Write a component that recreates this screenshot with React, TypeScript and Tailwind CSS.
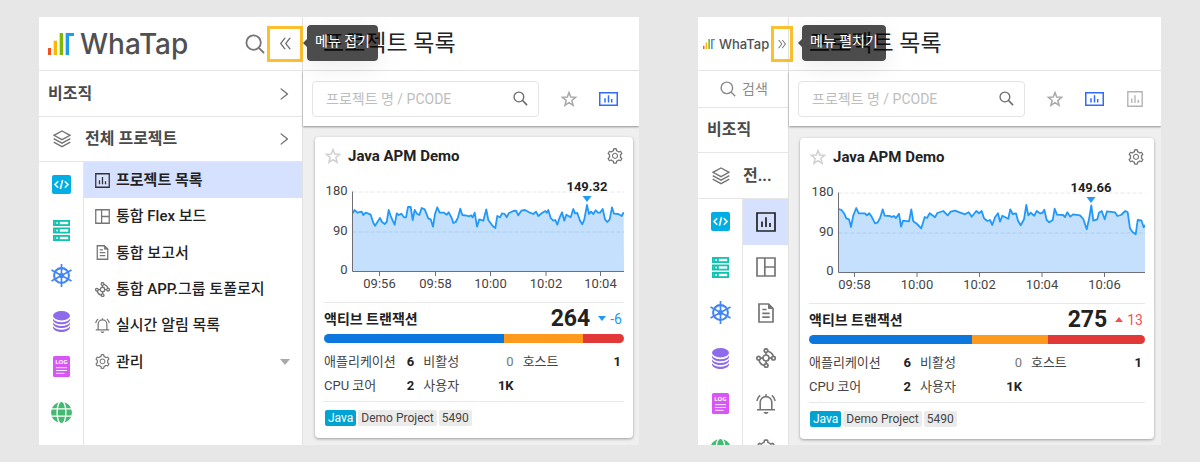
import React from 'react';
import {
  AiOutlineDoubleLeft,
  AiOutlineDoubleRight,
  AiOutlineRight,
  AiOutlineSetting,
} from 'react-icons/ai';

type IconProps = { className?: string };

/* ---------- line icons ---------- */

const SearchIcon = ({ className = '' }: IconProps) => (
  <svg viewBox="0 0 20 20" className={className} fill="none" stroke="currentColor" strokeWidth="1.8" aria-hidden="true">
    <circle cx="8.6" cy="8.6" r="7.2" />
    <path d="M13.8 13.8 19 19" />
  </svg>
);

const FieldSearchIcon = ({ className = '' }: IconProps) => (
  <svg viewBox="0 0 16 16" className={className} fill="none" stroke="currentColor" strokeWidth="1.4" aria-hidden="true">
    <circle cx="6.3" cy="6.3" r="5.2" />
    <path d="M9.9 9.9 15 15" strokeWidth="1.7" />
  </svg>
);

const StarIcon = ({ className = '' }: IconProps) => (
  <svg viewBox="0 0 24 24" className={className} fill="none" stroke="currentColor" strokeWidth="2" aria-hidden="true">
    <path d="m12 3.4 2.3 6 6.5.4-5 4.2 1.600 6.400-5.400-3.600-5.400 3.600L8.200 14l-5-4.200 6.500-.4z" />
  </svg>
);

const WideChartIcon = ({ className = '' }: IconProps) => (
  <svg viewBox="0 0 19 14" className={className} fill="none" stroke="currentColor" aria-hidden="true">
    <path d="M.75.75h17.5v12.5H.75z" strokeWidth="1.5" />
    <path d="M6 10.500V6.300M9.500 10.500V3.300M12.700 10.500V7" strokeWidth="1.500" />
  </svg>
);

const ChartIcon = ({ className = '' }: IconProps) => (
  <svg viewBox="0 0 20 20" className={className} fill="none" stroke="currentColor" strokeWidth="1.7" aria-hidden="true">
    <path d="M1 1h18v18H1z" />
    <path d="M6 15V9.500M10 15V5.300M14 15v-4" />
  </svg>
);

const BoardIcon = ({ className = '' }: IconProps) => (
  <svg viewBox="0 0 20 20" className={className} fill="none" stroke="currentColor" strokeWidth="1.700" aria-hidden="true">
    <path d="M1 1h18v18H1zM8.800 1v18M8.800 10H19" />
  </svg>
);

const ReportIcon = ({ className = '' }: IconProps) => (
  <svg viewBox="0 0 20 20" className={className} fill="none" stroke="currentColor" strokeWidth="1.700" aria-hidden="true">
    <path d="M3 1h9.500L17 5.500V19H3z" />
    <path d="M12.500 1v4.500H17z" fill="currentColor" strokeWidth="1" />
    <path d="M6.300 6.500h4.200M6.300 10.300h7.400M6.300 14.200h7.400" />
  </svg>
);

const TopologyIcon = ({ className = '' }: IconProps) => (
  <svg viewBox="0 0 20 20" className={className} fill="none" stroke="currentColor" strokeWidth="1.700" aria-hidden="true">
    <circle cx="10" cy="10" r="3" />
    <circle cx="10" cy="2.600" r="1.800" />
    <circle cx="2.600" cy="10.200" r="1.800" />
    <circle cx="17.500" cy="10.200" r="1.800" />
    <circle cx="10.200" cy="17.500" r="1.800" />
    <path d="M10 4.300V7M4.200 10.200H7M13 10.200h2.900M10.100 13v2.800M11.800 3.200c3.200.9 5 2.700 5.400 5.200M2.900 12c.7 3 2.400 4.700 5.500 5.400" />
  </svg>
);

const BellIcon = ({ className = '' }: IconProps) => (
  <svg viewBox="0 0 20 20" className={className} fill="none" stroke="currentColor" strokeWidth="1.600" aria-hidden="true">
    <path d="M1 15.700h18M4.200 15.700V8.400a5.800 5.800 0 0 1 11.600 0v7.300M10 2.600V.3" />
    <path d="M.9 6.800C1.300 4.300 2.400 2.600 4.200 1.300M19.100 6.800c-.4-2.500-1.500-4.200-3.300-5.500" />
    <path d="M7.500 18h5c-.4 1.300-1.300 2-2.500 2s-2.100-.7-2.500-2z" fill="currentColor" stroke="none" />
  </svg>
);

const LayersIcon = ({ className = '' }: IconProps) => (
  <svg viewBox="0 0 18 18" className={className} fill="none" stroke="currentColor" strokeWidth="1.400" aria-hidden="true">
    <path d="M9 1 17 5.300 9 9.600 1 5.300z" />
    <path d="m.7 8.700 8.300 4.400 8.300-4.400M.7 12.200 9 16.600l8.300-4.400" />
  </svg>
);

/* ---------- product icons ---------- */

const CodeIcon = () => (
  <svg viewBox="0 0 19 19" className="size-[19px]" aria-hidden="true">
    <rect width="19" height="19" rx="2" fill="#00aee6" />
    <path d="M6.200 6.300 3 9.500l3.200 3.200M12.800 6.300 16 9.500l-3.200 3.200M10.600 5 8.400 14" fill="none" stroke="#fff" strokeWidth="1.600" />
  </svg>
);

const ServerIcon = () => (
  <svg viewBox="0 0 17 21" className="h-[21px] w-[17px]" aria-hidden="true">
    {[0, 7.5, 15].map((y) => (
      <g key={y}>
        <rect x=".9" y={y + 0.9} width="15.200" height="4.200" fill="none" stroke="#11c3b0" strokeWidth="1.800" />
        <rect x="2" y={y + 1} width="4.800" height="4" fill="#11c3b0" />
        <rect x="3.300" y={y + 2.2} width="1.700" height="1.600" fill="#fff" />
      </g>
    ))}
  </svg>
);

const WheelIcon = () => (
  <svg viewBox="0 0 21 23" className="h-[23px] w-[21px]" fill="none" stroke="#4285f4" aria-hidden="true">
    <circle cx="10.500" cy="11.500" r="7.400" strokeWidth="2.100" />
    <path d="M10.500 0v23M.5 6l20 11M20.500 6l-20 11" strokeWidth="1.700" />
    <circle cx="10.500" cy="11.500" r="2.600" fill="#4285f4" stroke="none" />
  </svg>
);

const DatabaseIcon = () => (
  <svg viewBox="0 0 17 21" className="h-[21px] w-[17px]" aria-hidden="true">
    <ellipse cx="8.500" cy="4.700" rx="8.500" ry="4.700" fill="#8e6bea" />
    <path
      d="M0 7.800c1.200 2.200 4.600 3.400 8.500 3.400S15.800 10 17 7.800v1.700c-1 2.300-4.400 3.700-8.500 3.700S1 11.800 0 9.500zM0 11.500c1.200 2.200 4.600 3.400 8.500 3.400s7.300-1.200 8.500-3.400v1.700c-1 2.300-4.400 3.700-8.500 3.700S1 15.500 0 13.200zM0 15.300c1.200 2.200 4.600 3.400 8.500 3.400s7.300-1.200 8.500-3.400V17c-1 2.400-4.400 4-8.500 4S1 19.400 0 17z"
      fill="#8e6bea"
    />
  </svg>
);

const LogIcon = () => (
  <svg viewBox="0 0 17 21" className="h-[21px] w-[17px]" aria-hidden="true">
    <rect width="17" height="21" rx="1.500" fill="#d955f5" />
    <text x="8.500" y="8.300" textAnchor="middle" fill="#fff" className="font-['Noto_Sans'] text-[6px] font-bold">LOG</text>
    <path d="M3 11.700h11M3 14.500h11M3 17.300h8.500" stroke="#fff" strokeWidth=".9" />
  </svg>
);

const GlobeIcon = () => (
  <svg viewBox="0 0 62 62" className="size-[21px]" aria-hidden="true">
    <circle cx="31" cy="31" r="31" fill="#43b971" />
    <path d="M0 20.500h62M0 41.500h62" stroke="#fff" strokeWidth="4" />
    <ellipse cx="31" cy="31" rx="13" ry="34" fill="none" stroke="#fff" strokeWidth="4" />
  </svg>
);

const products = [
  { name: '애플리케이션', Icon: CodeIcon },
  { name: '서버', Icon: ServerIcon },
  { name: '쿠버네티스', Icon: WheelIcon },
  { name: '데이터베이스', Icon: DatabaseIcon },
  { name: '로그', Icon: LogIcon },
  { name: '브라우저', Icon: GlobeIcon },
];

const menus = [
  { name: '프로젝트 목록', Icon: ChartIcon },
  { name: '통합 Flex 보드', Icon: BoardIcon },
  { name: '통합 보고서', Icon: ReportIcon },
  { name: '통합 APP.그룹 토폴로지', Icon: TopologyIcon },
  { name: '실시간 알림 목록', Icon: BellIcon },
  { name: '관리', Icon: AiOutlineSetting },
];

/* ---------- brand ---------- */

const LogoMark = ({ className = '' }: IconProps) => (
  <svg viewBox="0 0 78 66" className={className} aria-hidden="true">
    <path d="M0 45h9v21H0z" fill="#f4511e" />
    <path d="M17 23h10v43H17z" fill="#fbb800" />
    <path d="M35 0h10v66H35z" fill="#7cb900" />
    <path d="M53 0h25v9H63v57H53z" fill="#1e9be9" />
  </svg>
);

/* ---------- sidebar ---------- */

function Tooltip({ children }: { children: React.ReactNode }) {
  return (
    <div
      role="tooltip"
      className="absolute top-2 left-1 z-20 h-9 rounded bg-black/70 px-2 text-sm leading-8 whitespace-nowrap text-white shadow-[0_6px_24px_rgba(0,0,0,0.08)]"
    >
      <span className="absolute top-[14px] -left-1 h-2 w-1 bg-black/70 [clip-path:polygon(100%_0,0_50%,100%_100%)]" />
      {children}
    </div>
  );
}

function ProductRail() {
  return (
    <nav aria-label="제품" className="w-[45px] shrink-0 border-r border-[#e6e6e6]">
      <ul className="grid h-[273px] grid-rows-6">
        {products.map(({ name, Icon }) => (
          <li key={name} className="flex items-center justify-center">
            <a href="#" aria-label={name}><Icon /></a>
          </li>
        ))}
      </ul>
    </nav>
  );
}

function ExpandedSidebar() {
  return (
    <aside className="flex w-[264px] shrink-0 flex-col border-r border-[#e2e2e2] bg-white text-[#4a4a4a]">
      <div className="flex h-[54px] items-center border-b border-[#e6e6e6] pl-[9px]">
        <a href="#" className="flex items-center gap-1.5 text-[#505052]">
          <LogoMark className="h-[22px] w-[26px]" />
          <span className="font-['Inter'] text-[28px] leading-9 font-medium">WhaTap</span>
        </a>
        <button type="button" aria-label="검색" className="ml-auto text-[#757575]">
          <SearchIcon className="size-5" />
        </button>
        <button
          type="button"
          aria-label="메뉴 접기"
          className="-mr-px ml-[2px] flex size-9 items-center justify-center border-3 border-[#fbc02d] text-[#6b6b6b]"
        >
          <AiOutlineDoubleLeft className="size-[17px]" />
        </button>
      </div>
      <button type="button" className="flex h-[46px] items-center justify-between border-b border-[#e6e6e6] pr-2.5 pl-[9px] text-base font-bold">
        비조직
        <AiOutlineRight className="size-4 text-[#757575]" />
      </button>
      <button type="button" className="flex h-[45px] items-center border-b border-[#e6e6e6] pr-2.5 pl-3.5 text-base font-bold">
        <LayersIcon className="size-[18px] text-[#757575]" />
        <span className="ml-3.5">전체 프로젝트</span>
        <AiOutlineRight className="ml-auto size-4 text-[#757575]" />
      </button>
      <div className="flex min-h-0 grow basis-0 overflow-hidden">
        <ProductRail />
        <nav aria-label="메뉴" className="flex-1">
          <ul className="grid h-[218px] grid-rows-6">
            {menus.map(({ name, Icon }, i) => (
              <li key={name} className={i === 0 ? 'bg-[#d6e0ff]' : ''}>
                <a href="#" className={`flex h-full items-center pr-3 pl-[11px] text-[15px] text-[#222] ${i === 0 ? 'font-bold' : 'font-medium'}`}>
                  <Icon className={i === 0 ? 'size-[15px] text-[#333]' : i === 5 ? 'size-[17px] -mx-px text-[#757575]' : 'size-[15px] text-[#757575]'} />
                  <span className="ml-1.5">{name}</span>
                  {i === 5 && (
                    <svg viewBox="0 0 10 6" className="ml-auto h-1.5 w-2.5" aria-hidden="true">
                      <path d="M0 0h10L5 6z" fill="#a9a9a9" />
                    </svg>
                  )}
                </a>
              </li>
            ))}
          </ul>
        </nav>
      </div>
    </aside>
  );
}

function CollapsedSidebar() {
  return (
    <aside className="flex w-[91px] shrink-0 flex-col border-r border-[#e2e2e2] bg-white text-[#4a4a4a]">
      <div className="flex h-[54px] items-center border-b border-[#e6e6e6] pl-[5px]">
        <a href="#" className="flex items-center gap-1 text-[#505052]">
          <LogoMark className="h-[10px] w-3" />
          <span className="font-['Inter'] text-[13px] leading-5 font-medium">WhaTap</span>
        </a>
        <button
          type="button"
          aria-label="메뉴 펼치기"
          className="relative z-10 -mr-[5px] ml-auto flex h-9 w-[22px] shrink-0 items-center justify-center border-3 border-[#fbc02d] text-[#757575]"
        >
          <AiOutlineDoubleRight className="size-3" />
        </button>
      </div>
      <button type="button" className="flex h-[37px] items-center gap-1.5 border-b border-[#e6e6e6] pl-[22px] text-sm text-[#8a8a8a]">
        <SearchIcon className="size-4" />
        검색
      </button>
      <button type="button" className="flex h-[45px] items-center border-b border-[#e6e6e6] pl-[9px] text-base font-bold">
        비조직
      </button>
      <button type="button" className="flex h-[46px] items-center border-b border-[#e6e6e6] pl-3.5 text-base font-bold">
        <LayersIcon className="size-[18px] text-[#757575]" />
        <span className="ml-[13px]">전...</span>
      </button>
      <div className="flex min-h-0 grow basis-0 overflow-hidden">
        <ProductRail />
        <nav aria-label="메뉴" className="flex-1">
          <ul className="grid h-[273px] grid-rows-6">
            {menus.map(({ name, Icon }, i) => (
              <li key={name} className={i === 0 ? 'bg-[#d6e0ff]' : ''}>
                <a href="#" aria-label={name} className="flex h-full items-center justify-center">
                  <Icon className={i === 0 ? 'size-5 text-[#222]' : i === 5 ? 'size-[22px] text-[#757575]' : 'size-5 text-[#757575]'} />
                </a>
              </li>
            ))}
          </ul>
        </nav>
      </div>
    </aside>
  );
}

/* ---------- chart ---------- */

type ChartProps = {
  width: number;
  axisX: number;
  originX: number;
  originY: number;
  samples: string;
  ticks: [number, string][];
  peakX: number;
  peak: string;
};

function AreaChart({ width, axisX, originX, originY, samples, ticks, peakX, peak }: ChartProps) {
  const line = samples
    .split(' ')
    .map((pair) => {
      const [x, y] = pair.split(',').map(Number);
      return `${(x / 3 + originX).toFixed(1)},${(y / 3 + originY).toFixed(1)}`;
    })
    .join(' ');
  return (
    <svg viewBox={`0 0 ${width} 120`} className="block h-auto w-full text-[13px]" role="img" aria-label="액티브 트랜잭션 추이">
      <path d={`M${axisX} 17H${width}`} stroke="#e8e8e8" strokeDasharray="4 2" />
      <polygon points={`${axisX},96 ${line} ${width},96`} fill="#c5e0fd" />
      <path d={`M${axisX} 57H${width}`} stroke="#abcdec" strokeDasharray="4 2" />
      <polyline points={line} fill="none" stroke="#2199fb" strokeWidth="1.8" strokeLinejoin="round" />
      <path d={`M${axisX} 16.500V96.500H${width}`} fill="none" stroke="#6e7079" />
      <g fill="#444" textAnchor="end">
        <text x={axisX - 5} y="20">180</text>
        <text x={axisX - 5} y="60">90</text>
        <text x={axisX - 5} y="99">0</text>
      </g>
      <g fill="#444" textAnchor="middle">
        {ticks.map(([x, label]) => (
          <g key={label}>
            <path d={`M${x} 96v5`} stroke="#6e7079" />
            <text x={x} y="113">{label}</text>
          </g>
        ))}
      </g>
      <text x={peakX} y="16" textAnchor="middle" fill="#222" className="font-bold">{peak}</text>
      <path d={`M${peakX - 4.5} 21h9l-4.500 6z`} fill="#2199fb" />
    </svg>
  );
}

const chartBefore: ChartProps = {
  width: 300,
  axisX: 28.5,
  originX: -24,
  originY: -45,
  samples:
    '158,250 164,240 172,248 185,245 190,255 197,248 212,254 220,278 225,287 240,264 246,276 254,282 260,276 266,240 272,258 278,272 284,284 290,250 296,255 304,251 312,262 318,262 324,231 332,231 338,270 344,240 351,251 358,255 365,234 374,238 385,265 392,268 399,290 405,252 412,232 419,248 432,248 440,254 446,247 455,264 460,279 467,276 474,262 481,236 487,255 500,257 508,259 513,256 518,262 524,248 531,290 538,268 550,272 559,238 565,270 578,288 586,294 592,258 600,262 606,250 614,252 620,262 626,250 640,243 648,242 655,256 664,242 675,240 690,248 700,252 708,245 715,258 727,248 736,243 740,248 745,240 752,264 760,272 766,270 772,284 779,262 786,247 793,272 799,254 812,262 820,237 825,250 832,249 840,272 847,283 853,268 861,225 867,252 873,245 880,252 887,241 894,248 900,248 908,237 915,268 922,276 929,268 936,232 942,251 955,252 965,258 971,247',
  ticks: [[55.5, '09:56'], [111.5, '09:58'], [166.5, '10:00'], [222, '10:02'], [276.5, '10:04']],
  peakX: 263,
  peak: '149.32',
};

const chartAfter: ChartProps = {
  width: 336,
  axisX: 29.5,
  originX: 91,
  originY: -46,
  samples:
    '-183,237 -175,241 -167,251 -161,265 -153,268 -147,291 -140,256 -131,234 -124,250 -106,250 -99,256 -92,250 -84,262 -75,280 -67,277 -60,265 -52,238 -46,257 -30,258 -25,261 -19,258 -12,264 -3,251 3,290 9,272 27,274 34,238 40,274 51,282 64,295 74,261 81,264 89,250 105,262 112,249 130,243 143,256 152,245 165,242 195,253 206,247 215,260 229,243 237,250 245,243 252,265 262,273 270,270 277,285 285,262 294,250 300,275 307,257 325,266 331,238 338,252 348,250 354,272 362,286 372,268 379,225 385,256 392,248 403,257 410,243 420,250 427,249 433,239 440,270 448,277 458,270 464,236 471,254 489,255 495,261 502,247 511,260 519,253 540,256 550,267 560,298 567,268 574,226 580,272 592,268 597,248 605,243 614,268 621,244 645,247 652,258 663,255 676,243 683,247 690,295 697,305 707,313 713,270 724,271 731,292 735,285',
  ticks: [[45.5, '09:58'], [108, '10:00'], [170.5, '10:02'], [233, '10:04'], [295.5, '10:06']],
  peakX: 282,
  peak: '149.66',
};

/* ---------- main area ---------- */

function Stat({ label, value, muted = false }: { label: string; value: string; muted?: boolean }) {
  return (
    <div className="flex justify-between">
      <dt className="text-[#444]">{label}</dt>
      <dd className={muted ? 'text-[#777]' : 'font-bold text-[#222]'}>{value}</dd>
    </div>
  );
}

type CardProps = {
  chart: ChartProps;
  total: string;
  delta: string;
  rising?: boolean;
  shares: [number, number, number];
};

function ProjectCard({ chart, total, delta, rising = false, shares }: CardProps) {
  return (
    <article className="rounded bg-white px-[9px] pb-3 shadow-[0_1px_3px_rgba(0,0,0,0.35)]">
      <header className="flex h-[38px] items-center">
        <button type="button" aria-label="즐겨찾기" className="text-[#d0d0d0]">
          <StarIcon className="size-[18px]" />
        </button>
        <h2 className="ml-1.5 text-[15px] font-bold text-[#222]">Java APM Demo</h2>
        <button type="button" aria-label="설정" className="ml-auto text-[#757575]">
          <AiOutlineSetting className="size-[18px]" />
        </button>
      </header>
      <AreaChart {...chart} />
      <div className="mt-[7px] flex h-8 items-center border-t border-[#e8e8e8]">
        <h3 className="text-sm leading-7 font-bold text-[#222]">액티브 트랜잭션</h3>
        <strong className="ml-auto text-[23px] leading-7 text-[#222]">{total}</strong>
        <span className={`ml-2 flex items-center gap-1 pr-0.5 text-sm ${rising ? 'text-[#f5504e]' : 'text-[#2199fb]'}`}>
          <svg viewBox="0 0 8 5" className="h-[5px] w-2" fill="currentColor" aria-hidden="true">
            <path d={rising ? 'M0 5h8L4 0z' : 'M0 0h8L4 5z'} />
          </svg>
          {delta}
        </span>
      </div>
      <div className="flex h-[9px] overflow-hidden rounded-full">
        <div className="bg-[#0c78dd]" style={{ flexGrow: shares[0] }} />
        <div className="bg-[#ff9a1f]" style={{ flexGrow: shares[1] }} />
        <div className="bg-[#e23838]" style={{ flexGrow: shares[2] }} />
      </div>
      <dl className="mt-[7px] grid grid-cols-[90fr_90fr_98fr] gap-x-[9px] border-b border-[#e8e8e8] pr-[3px] pb-[3px] text-[13px] leading-6">
        <Stat label="애플리케이션" value="6" />
        <Stat label="비활성" value="0" muted />
        <Stat label="호스트" value="1" />
        <Stat label="CPU 코어" value="2" />
        <Stat label="사용자" value="1K" />
      </dl>
      <ul className="mt-2 flex gap-0.5 pl-px text-xs leading-4 text-[#444]">
        <li className="rounded-xs bg-[#00a3d2] px-[3px] text-white">Java</li>
        <li className="rounded-xs bg-[#ebebeb] px-[3px]">Demo Project</li>
        <li className="rounded-xs bg-[#ebebeb] px-[3px]">5490</li>
      </ul>
    </article>
  );
}

function Main({ tooltip, wide = false, card }: { tooltip: string; wide?: boolean; card: CardProps }) {
  return (
    <main className="relative min-w-0 flex-1 bg-[#efefef]">
      <div className={`absolute top-0 ${wide ? 'left-[9px]' : 'left-0'}`}>
        <Tooltip>{tooltip}</Tooltip>
      </div>
      <h1 className="flex h-[54px] items-center border-b border-[#e8e8e8] bg-white pt-0.5 pl-5 text-[23px] text-[#222]">프로젝트 목록</h1>
      <div className="flex h-[55px] items-center gap-[21px] bg-white pl-[9px] shadow-[0_1px_2px_rgba(0,0,0,0.4)]">
        <div className="flex h-9 w-[227px] items-center rounded border border-[#e4e4e4] pr-[10px] pl-[13px]">
          <input
            type="text"
            aria-label="프로젝트 명 / PCODE"
            placeholder="프로젝트 명 / PCODE"
            className="min-w-0 flex-1 text-sm outline-none placeholder:text-[#bdbdbd]"
          />
          <button type="button" aria-label="찾기" className="text-[#6b6b6b]">
            <FieldSearchIcon className="size-[15px]" />
          </button>
        </div>
        <button type="button" aria-label="즐겨찾기만 보기" className="text-[#a8a8a8]">
          <StarIcon className="size-[18px]" />
        </button>
        <button type="button" aria-label="카드 보기" className="text-[#2f6bff]">
          <WideChartIcon className="h-3.5 w-[19px]" />
        </button>
        {wide && (
          <button type="button" aria-label="차트 보기" className="ml-0.5 text-[#b3b3b3]">
            <ChartIcon className="size-4" />
          </button>
        )}
      </div>
      <div className={wide ? 'pt-3 pr-[7px] pb-1.5 pl-[11px]' : 'pt-[11px] pr-1.5 pb-[7px] pl-3'}>
        <ProjectCard {...card} />
      </div>
    </main>
  );
}

export default function App() {
  return (
    <div className="grid min-h-screen grid-cols-[600fr_463fr] items-start gap-[59px] bg-[#e7e7e7] px-[39px] py-[17px] font-['Roboto','Noto_Sans_CJK_KR',sans-serif]">
      <section className="flex overflow-hidden" aria-label="펼친 메뉴">
        <ExpandedSidebar />
        <Main
          tooltip="메뉴 접기"
          card={{ chart: chartBefore, total: '264', delta: '-6', shares: [180, 79, 41] }}
        />
      </section>
      <section className="flex overflow-hidden" aria-label="접은 메뉴">
        <CollapsedSidebar />
        <Main
          tooltip="메뉴 펼치기"
          wide
          card={{ chart: chartAfter, total: '275', delta: '13', rising: true, shares: [163, 76, 97] }}
        />
      </section>
    </div>
  );
}
